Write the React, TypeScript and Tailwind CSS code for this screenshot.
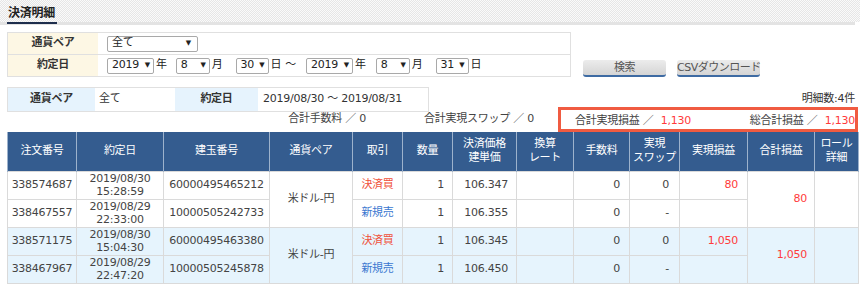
import React from 'react';

type Trade = {
  order: string;
  date: string;
  time: string;
  position: string;
  side: '決済買' | '新規売';
  qty: string;
  price: string;
  fee: string;
  swap: string;
  pl: string;
};

type Group = { pair: string; total: string; rows: Trade[] };

const groups: Group[] = [
  {
    pair: '米ドル-円',
    total: '80',
    rows: [
      { order: '338574687', date: '2019/08/30', time: '15:28:59', position: '60000495465212', side: '決済買', qty: '1', price: '106.347', fee: '0', swap: '0', pl: '80' },
      { order: '338467557', date: '2019/08/29', time: '22:33:00', position: '10000505242733', side: '新規売', qty: '1', price: '106.355', fee: '0', swap: '-', pl: '' },
    ],
  },
  {
    pair: '米ドル-円',
    total: '1,050',
    rows: [
      { order: '338571175', date: '2019/08/30', time: '15:04:30', position: '60000495463380', side: '決済買', qty: '1', price: '106.345', fee: '0', swap: '0', pl: '1,050' },
      { order: '338467967', date: '2019/08/29', time: '22:47:20', position: '10000505245878', side: '新規売', qty: '1', price: '106.450', fee: '0', swap: '-', pl: '' },
    ],
  },
];

const Select = ({ value, className }: { value: string; className: string }) => (
  <div
    className={`inline-flex items-center justify-between h-[16px] border border-[#a9a9a9] rounded-[2px] bg-white pl-[4px] pr-[3px] text-[#222] ${className}`}
  >
    <span>{value}</span>
    <span className="text-[7px] leading-none">▼</span>
  </div>
);

const Btn = ({ label }: { label: string }) => (
  <button className="h-[17px] w-[83px] rounded-[3px] bg-gradient-to-b from-[#ececec] to-[#d5d5d5] border-b-2 border-[#3e6ba3] text-[#555] text-[11px] leading-none whitespace-nowrap tracking-[-0.5px] px-0">
    {label}
  </button>
);

const th = 'bg-[#345c8f] text-white font-normal border-x border-[#9db2cc] leading-[14px] text-center';
const td = 'border border-[#dadada] px-0';

export default function App() {
  return (
    <div
      className="w-[860px] h-[286px] overflow-hidden bg-white text-[11px] text-[#444] tracking-[-0.25px]"
      style={{ fontFamily: '"DejaVu Sans", "Noto Sans CJK JP", sans-serif' }}
    >
      {/* title band */}
      <div className="h-[22px] bg-[repeating-conic-gradient(#e6e6e6_0%_25%,#fafafa_0%_50%)] bg-[length:2px_2px] pl-[8px] pt-[6px]">
        <span className="font-bold text-[#222] text-[12px] leading-none">決済明細</span>
      </div>
      <div className="flex h-[3px]">
        <div className="w-[7px] bg-[#e3e3e3]" />
        <div className="w-[50px] flex flex-col">
          <div className="h-[2px] bg-[#1d2d4c]" />
          <div className="h-[1px] bg-[#e3e3e3]" />
        </div>
        <div className="flex-1 bg-[#e3e3e3] mr-[5px]" />
      </div>

      {/* search form */}
      <div className="flex items-end mt-[7px] ml-[7px]">
        <div className="w-[564px] border border-[#e0e0e0]">
          <div className="flex h-[22px] border-b border-[#e0e0e0]">
            <div className="w-[90px] bg-[#fdf7e4] font-bold text-[#333] flex items-center justify-center">通貨ペア</div>
            <div className="flex items-center pl-[9px]">
              <Select value="全て" className="w-[91px] pr-[6px]" />
            </div>
          </div>
          <div className="flex h-[21px]">
            <div className="w-[90px] bg-[#fdf7e4] font-bold text-[#333] flex items-center justify-center">約定日</div>
            <div className="flex items-center pl-[9px] text-[#222]">
              <Select value="2019" className="w-[47px]" />
              <span className="ml-[2px]">年</span>
              <Select value="8" className="w-[34px] ml-[9px]" />
              <span className="ml-[2px]">月</span>
              <Select value="30" className="w-[33px] ml-[13px]" />
              <span className="ml-[2px]">日</span>
              <span className="ml-[4px]">～</span>
              <Select value="2019" className="w-[47px] ml-[10px]" />
              <span className="ml-[2px]">年</span>
              <Select value="8" className="w-[34px] ml-[10px]" />
              <span className="ml-[2px]">月</span>
              <Select value="31" className="w-[33px] ml-[13px]" />
              <span className="ml-[2px]">日</span>
            </div>
          </div>
        </div>
        <div className="flex gap-[11px] ml-[12px]">
          <Btn label="検索" />
          <Btn label="CSVダウンロード" />
        </div>
      </div>

      {/* condition summary */}
      <div className="flex items-center mt-[10px] ml-[7px] mr-[5px] h-[25px]">
        <div className="flex h-full w-[422px] border border-[#e0e0e0]">
          <div className="w-[87px] bg-[#e6f3fd] font-bold text-[#333] flex items-center justify-center">通貨ペア</div>
          <div className="w-[80px] flex items-center pl-[4px] text-[#333]">全て</div>
          <div className="w-[83px] bg-[#e6f3fd] font-bold text-[#333] flex items-center justify-center">約定日</div>
          <div className="flex-1 flex items-center pl-[5px] text-[#333]">2019/08/30 ～ 2019/08/31</div>
        </div>
        <div className="ml-auto text-[#333]">明細数:4件</div>
      </div>
      <div className="flex items-center justify-end -mt-[5px] h-[25px] mr-[2px] text-[#444]">
        <span>合計手数料 ／ 0</span>
        <span className="ml-[58px]">合計実現スワップ ／ 0</span>
        <div className="ml-[24px] w-[300px] h-full border-[3px] border-[#f05b41] flex items-center justify-between pl-[14px] pr-[0px] pt-[3px]">
          <span>
            合計実現損益 ／ <span className="text-[#ff3b3b] ml-[4px]">1,130</span>
          </span>
          <span>
            総合計損益 ／ <span className="text-[#ff3b3b] ml-[4px]">1,130</span>
          </span>
        </div>
      </div>

      {/* detail table */}
      <div className="ml-[7px]">
        <table className="table-fixed border-collapse w-[851px] text-[11px]">
          <colgroup>
            <col className="w-[69px]" />
            <col className="w-[87px]" />
            <col className="w-[106px]" />
            <col className="w-[83px]" />
            <col className="w-[50px]" />
            <col className="w-[50px]" />
            <col className="w-[64px]" />
            <col className="w-[57px]" />
            <col className="w-[56px]" />
            <col className="w-[50px]" />
            <col className="w-[68px]" />
            <col className="w-[67px]" />
            <col className="w-[44px]" />
          </colgroup>
          <thead>
            <tr className="h-[39px]">
              <th className={th}>注文番号</th>
              <th className={th}>約定日</th>
              <th className={th}>建玉番号</th>
              <th className={th}>通貨ペア</th>
              <th className={th}>取引</th>
              <th className={th}>数量</th>
              <th className={th}>決済価格<br />建単価</th>
              <th className={th}>換算<br />レート</th>
              <th className={th}>手数料</th>
              <th className={th}>実現<br />スワップ</th>
              <th className={th}>実現損益</th>
              <th className={th}>合計損益</th>
              <th className={th}>ロール<br />詳細</th>
            </tr>
          </thead>
          <tbody>
            {groups.map((g, gi) =>
              g.rows.map((r, ri) => (
                <tr key={`${gi}-${ri}`} className={`h-[28px] ${gi % 2 === 1 ? 'bg-[#e6f4fd]' : 'bg-white'}`}>
                  <td className={`${td} text-center`}>{r.order}</td>
                  <td className={`${td} text-center leading-[13px]`}>
                    {r.date}
                    <br />
                    {r.time}
                  </td>
                  <td className={`${td} text-center`}>{r.position}</td>
                  {ri === 0 && (
                    <td rowSpan={2} className={`${td} text-center`}>
                      {g.pair}
                    </td>
                  )}
                  <td className={`${td} text-center ${r.side === '決済買' ? 'text-[#f0503a]' : 'text-[#3b78d0]'}`}>
                    {r.side}
                  </td>
                  <td className={`${td} text-right pr-[8px]`}>{r.qty}</td>
                  <td className={`${td} text-right pr-[8px]`}>{r.price}</td>
                  <td className={td}></td>
                  <td className={`${td} text-right pr-[9px]`}>{r.fee}</td>
                  <td className={`${td} text-right pr-[10px]`}>{r.swap}</td>
                  <td className={`${td} text-right pr-[9px] text-[#ff3b3b]`}>{r.pl}</td>
                  {ri === 0 && (
                    <td rowSpan={2} className={`${td} text-right pr-[7px] text-[#ff3b3b]`}>
                      {g.total}
                    </td>
                  )}
                  {ri === 0 && <td rowSpan={2} className={td}></td>}
                </tr>
              ))
            )}
          </tbody>
        </table>
      </div>
    </div>
  );
}
